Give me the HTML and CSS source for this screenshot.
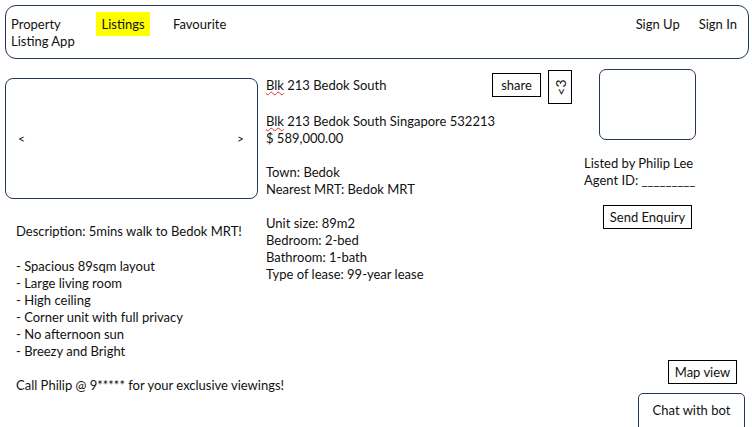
FILE: index.html
```html
<!DOCTYPE html>
<html>
<head>
<meta charset="utf-8">
<link rel="stylesheet" href="styles.css">
</head>
<body>
<header class="topbar">
  <div class="brand">Property<br>Listing App</div>
  <nav class="nav">
    <span class="nav-item active">Listings</span>
    <span class="nav-item">Favourite</span>
  </nav>
  <div class="auth">
    <span>Sign Up</span>
    <span>Sign In</span>
  </div>
</header>
<main class="content">
  <section class="left">
    <div class="carousel">
      <span>&lt;</span>
      <span>&gt;</span>
    </div>
    <div class="desc">
      <p>Description: 5mins walk to Bedok MRT!</p>
      <p>- Spacious 89sqm layout<br>- Large living room<br>- High ceiling<br>- Corner unit with full privacy<br>- No afternoon sun<br>- Breezy and Bright</p>
      <p>Call Philip @ 9***** for your exclusive viewings!</p>
    </div>
  </section>
  <section class="middle">
    <div class="title-row">
      <div class="title"><span class="spell">Blk</span> 213 Bedok South</div>
      <div class="actions">
        <span class="btn share">share</span>
        <span class="btn heart"><span class="rot">&lt;3</span></span>
      </div>
    </div>
    <p class="block"><span class="spell">Blk</span> 213 Bedok South Singapore 532213<br>$ 589,000.00</p>
    <p class="block">Town: Bedok<br>Nearest MRT: Bedok MRT</p>
    <p class="block">Unit size: 89m2<br>Bedroom: 2-bed<br>Bathroom: 1-bath<br>Type of lease: 99-year lease</p>
  </section>
  <aside class="right">
    <div class="agent-photo"></div>
    <p class="agent">Listed by Philip Lee<br>Agent ID: _________</p>
    <span class="btn enquiry">Send Enquiry</span>
    <div class="bottom">
      <span class="btn map">Map view</span>
      <div class="chat">Chat with bot</div>
    </div>
  </aside>
</main>
</body>
</html>
```
FILE: styles.css
```css
* { box-sizing: border-box; }
html, body { margin: 0; padding: 0; }
body {
  font-family: "Lato", "Open Sans", sans-serif;
  font-size: 13px;
  line-height: 17px;
  color: #111;
  background: #fff;
  width: 752px;
  height: 427px;
  overflow: hidden;
  white-space: nowrap;
}
p { margin: 0; }

.topbar {
  margin: 5px 3px 0 5px;
  height: 54px;
  border: 1.5px solid #22385a;
  border-radius: 11px;
  display: flex;
  align-items: flex-start;
  padding: 5.5px 11px 0 5px;
}
.brand { width: 85px; padding-top: 4px; }
.nav { display: flex; gap: 23px; align-items: flex-start; }
.nav-item { padding: 4px 0; }
.nav-item.active { background: #ffff00; padding: 4px 5px 3px; width: 54px; height: 24px; text-align: center; }
.auth { margin-left: auto; display: flex; gap: 19px; padding-top: 4px; }

.content {
  display: grid;
  grid-template-columns: 261px 318px 1fr;
  height: 368px;
}
.left { padding-left: 5px; padding-top: 19px; }
.carousel {
  width: 253px;
  height: 121px;
  border: 1.5px solid #22385a;
  border-radius: 8px;
  display: flex;
  justify-content: space-between;
  align-items: center;
  padding: 0 13px 0 12px;
  font-size: 12px;
}
.desc { padding-left: 11px; padding-top: 24px; }
.desc p + p { margin-top: 17px; }
.desc p:nth-child(2) { margin-top: 18px; }

.middle { padding-left: 5px; padding-top: 18px; }
.title-row { display: flex; align-items: flex-start; height: 36px; }
.actions { margin-left: auto; display: flex; gap: 7px; align-items: flex-start; margin-top: -4px; margin-right: 7px; }
.btn {
  border: 1px solid #000;
  display: inline-flex;
  align-items: center;
  justify-content: center;
  background: #fff;
}
.share { width: 49px; height: 24px; }
.heart { width: 24px; height: 34px; margin-top: -3px; }
.rot { display: inline-block; transform: rotate(-90deg); font-size: 14px; }
.spell {
  text-decoration: underline wavy #e03030;
  text-decoration-thickness: 1px;
  text-underline-offset: 1px;
}
.block + .block { margin-top: 17px; }

.right {
  padding-top: 10px;
  padding-left: 5px;
  display: flex;
  flex-direction: column;
  align-items: flex-start;
}
.agent-photo {
  width: 97px;
  height: 71px;
  border: 1.5px solid #22385a;
  border-radius: 7px;
  margin-left: 15px;
}
.agent { margin-top: 15px; }
.enquiry { margin-top: 16px; margin-left: 19px; width: 89px; height: 24px; }
.bottom {
  margin-top: auto;
  align-self: stretch;
  display: flex;
  flex-direction: column;
  align-items: flex-end;
  padding-right: 7px;
}
.map { width: 69px; height: 24px; margin-right: 8px; }
.chat {
  margin-top: 9px;
  width: 107px;
  height: 44px;
  border: 1.5px solid #22385a;
  border-radius: 5px;
  padding-top: 8px;
  text-align: center;
  margin-bottom: -10px;
}
```
